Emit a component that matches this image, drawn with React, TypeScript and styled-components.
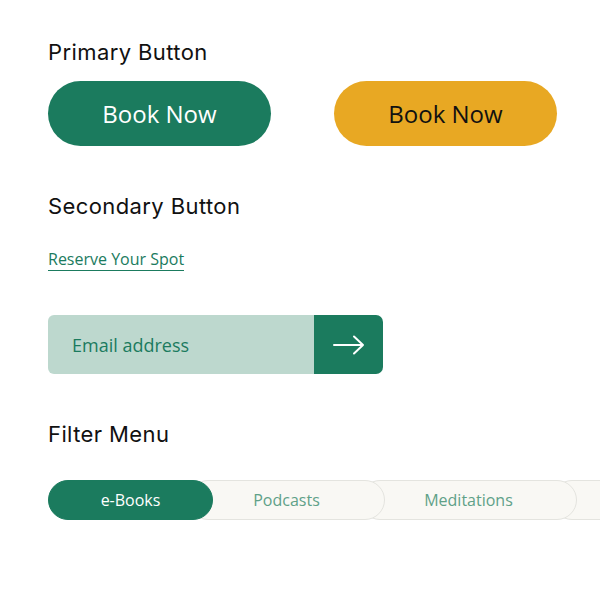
import React from 'react'
import styled, {createGlobalStyle} from 'styled-components'

const GlobalStyle = createGlobalStyle`
    body {
        margin: 0;
        background: #fff;
        overflow: hidden;
        font-family: 'Open Sans', 'Noto Sans', sans-serif;
    }
`

const Page = styled.div`
    width: 600px;
    height: 600px;
    padding: 39px 0 0 48px;
    box-sizing: border-box;
    display: flex;
    flex-direction: column;
`

const Heading = styled.h2<{$gap: number}>`
    margin: 0 0 ${({$gap}) => $gap}px;
    font-family: Inter, 'Liberation Sans', sans-serif;
    font-weight: 400;
    font-size: 22px;
    line-height: 26px;
    color: #111;
    letter-spacing: 0.4px;
`

const ButtonRow = styled.div`
    display: flex;
    gap: 63px;
    margin-bottom: 47px;
`

const PillButton = styled.button<{$variant: 'green' | 'yellow'}>`
    width: 223px;
    height: 65px;
    border: none;
    border-radius: 33px;
    font-family: 'Open Sans', sans-serif;
    font-size: 24px;
    cursor: pointer;
    background: ${({$variant}) => ($variant === 'green' ? '#1b7b5e' : '#e8a823')};
    color: ${({$variant}) => ($variant === 'green' ? '#fff' : '#111')};
`

const TextLink = styled.a`
    align-self: flex-start;
    color: #1b7b5e;
    font-size: 16px;
    line-height: 20px;
    text-decoration: none;
    border-bottom: 1.5px solid #1b7b5e;
    padding-bottom: 1px;
    margin-bottom: 44px;
`

const EmailForm = styled.form`
    display: flex;
    width: 335px;
    height: 59px;
    margin-bottom: 47px;
`

const EmailInput = styled.input`
    flex: 1;
    min-width: 0;
    border: none;
    outline: none;
    background: #bdd8ce;
    border-radius: 6px 0 0 6px;
    padding: 0 24px;
    font-family: 'Open Sans', sans-serif;
    font-size: 18px;
    color: #1b7b5e;
    &::placeholder {
        color: #1b7b5e;
    }
`

const SubmitButton = styled.button`
    width: 69px;
    border: none;
    background: #1b7b5e;
    border-radius: 0 7px 7px 0;
    display: flex;
    align-items: center;
    justify-content: center;
    cursor: pointer;
`

const Tabs = styled.div`
    display: flex;
    width: 700px;
`

const Tab = styled.button<{$active?: boolean; $width: number; $z: number}>`
    flex: none;
    width: ${({$width}) => $width}px;
    height: 40px;
    margin-left: -25px;
    position: relative;
    z-index: ${({$z}) => $z};
    border-radius: 20px;
    border: 1px solid ${({$active}) => ($active ? '#1b7b5e' : '#e4e4df')};
    background: ${({$active}) => ($active ? '#1b7b5e' : '#f9f8f4')};
    color: ${({$active}) => ($active ? '#fff' : '#5fa188')};
    font-family: 'Open Sans', sans-serif;
    font-size: 16px;
    padding: 0;
    cursor: pointer;
    &:first-child {
        margin-left: 0;
    }
`

const filters = [
    {label: 'e-Books', width: 165},
    {label: 'Podcasts', width: 197},
    {label: 'Meditations', width: 217},
    {label: '', width: 190},
]

const App = () => {
    return (
        <Page>
            <GlobalStyle />
            <Heading $gap={16}>Primary Button</Heading>
            <ButtonRow>
                <PillButton $variant="green">Book Now</PillButton>
                <PillButton $variant="yellow">Book Now</PillButton>
            </ButtonRow>

            <Heading $gap={30}>Secondary Button</Heading>
            <TextLink href="#">Reserve Your Spot</TextLink>

            <EmailForm onSubmit={(e) => e.preventDefault()}>
                <EmailInput type="email" placeholder="Email address" />
                <SubmitButton type="submit" aria-label="submit">
                    <svg width="32" height="20" viewBox="0 0 32 20" fill="none">
                        <path
                            d="M1 10h29M21 1.5l9 8.5-9 8.5"
                            stroke="#fff"
                            strokeWidth="2"
                            strokeLinecap="round"
                            strokeLinejoin="round"
                        />
                    </svg>
                </SubmitButton>
            </EmailForm>

            <Heading $gap={33}>Filter Menu</Heading>
            <Tabs>
                {filters.map((f, i) => (
                    <Tab
                        key={i}
                        $active={i === 0}
                        $width={f.width}
                        $z={filters.length - i}
                    >
                        {f.label}
                    </Tab>
                ))}
            </Tabs>
        </Page>
    )
}

export default App
